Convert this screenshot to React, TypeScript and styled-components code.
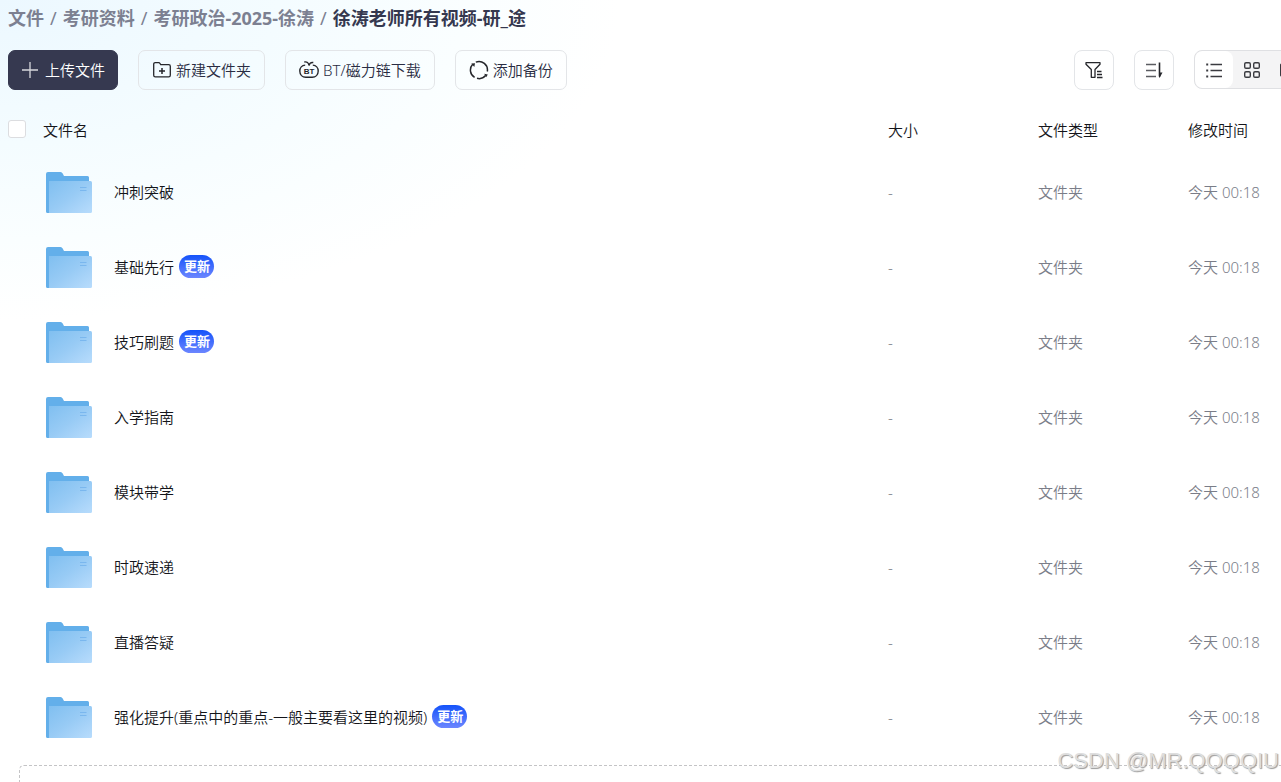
import React from "react";
import styled, { createGlobalStyle, css } from "styled-components";

const GlobalStyle = createGlobalStyle`
  * { box-sizing: border-box; }
  body {
    margin: 0;
    background: #fff;
    color: #14151a;
    font-family: "Noto Sans", "Noto Sans CJK SC", sans-serif;
    font-size: 15px;
    font-weight: 350;
    line-height: 20px;
  }
  button, input { font: inherit; }
`;

const Page = styled.main`
  position: relative;
  display: flex;
  flex-direction: column;
  height: 100vh;
  min-height: 782px;
  overflow: hidden;
  padding-left: 8px;
  background: radial-gradient(ellipse 620px 320px at 0 0, #ecf8ff 0%, #f4fcff 45%, #fafeff 75%, #ffffff 100%);
`;

const Breadcrumb = styled.nav`
  display: flex;
  align-items: center;
  gap: 6px;
  padding-top: 6px;
  height: 30px;
  font-size: 18px;
  line-height: 24px;
  font-weight: 700;
  color: #7c8091;
  white-space: nowrap;
`;

const Crumb = styled.a<{ $current?: boolean }>`
  color: ${(p) => (p.$current ? "#35384f" : "inherit")};
  text-decoration: none;
`;

const Slash = styled.span`
  font-size: 18px;
  font-weight: 400;
`;

const Toolbar = styled.div`
  display: flex;
  justify-content: space-between;
  flex-shrink: 0;
  margin: 20px -29px 15px 0;
`;

const Group = styled.div`
  display: flex;
  gap: 20px;
`;

const ActionButton = styled.button<{ $primary?: boolean }>`
  display: flex;
  align-items: center;
  gap: 4px;
  height: 40px;
  padding: 0 13px;
  border: 1px solid #e3e5e8;
  border-radius: 7px;
  background: transparent;
  color: #292c42;
  white-space: nowrap;
  cursor: pointer;
  ${(p) =>
    p.$primary &&
    css`
      gap: 6px;
      padding: 0 12px;
      border-color: #363950;
      background: #363950;
      color: #fff;
    `}
`;

const IconButton = styled.button`
  display: grid;
  place-items: center;
  width: 40px;
  height: 40px;
  padding: 0;
  border: 1px solid #e3e5e8;
  border-radius: 8px;
  background: #fff;
  color: #25262b;
  cursor: pointer;
`;

const ViewSwitch = styled.div`
  display: flex;
  height: 39px;
  overflow: hidden;
  border: 1px solid #dfe0e3;
  border-radius: 8px;
  background: #f4f4f5;
`;

const ViewButton = styled.button<{ $active?: boolean }>`
  display: grid;
  place-items: center;
  width: 38px;
  padding: 0;
  border: 0;
  border-radius: 8px;
  background: ${(p) => (p.$active ? "#fff" : "transparent")};
  color: #25262b;
  cursor: pointer;
`;

const FileTable = styled.table`
  width: 100%;
  table-layout: fixed;
  border-collapse: collapse;
`;

const Column = styled.col<{ $width?: number }>`
  width: ${(p) => (p.$width ? `${p.$width}px` : "auto")};
`;

const HeadCell = styled.th`
  height: 50px;
  padding: 0;
  text-align: left;
  font-weight: inherit;
`;

const Cell = styled.td`
  height: 75px;
  padding: 0;
`;

const MetaCell = styled(Cell)`
  padding-bottom: 2px;
  color: #7a7d88;
`;

const Checkbox = styled.input`
  appearance: none;
  display: block;
  width: 18px;
  height: 18px;
  margin: 0 0 2px;
  border: 1px solid #dcdde0;
  border-radius: 3px;
  background: #fff;
`;

const FileEntry = styled.div`
  display: flex;
  align-items: center;
  padding-left: 3px;
  white-space: nowrap;
`;

const FileLink = styled.a`
  margin: 0 0 2px 22px;
  color: inherit;
  text-decoration: none;
`;

const Badge = styled.span`
  height: 23px;
  margin: 0 0 2px 5px;
  padding: 0 4px 0 5px;
  border-radius: 12px;
  background: linear-gradient(#1453fa, #6c86ff);
  color: #fff;
  font-size: 13px;
  font-weight: 700;
  line-height: 23px;
`;

const DropZone = styled.div`
  flex: 1;
  margin: 10px 0 0 11px;
  border: 1px dashed #c4c4c6;
  border-right: 0;
  border-bottom: 0;
  border-top-left-radius: 5px;
`;

const Watermark = styled.span`
  position: absolute;
  right: 2px;
  bottom: 8px;
  color: #dedede;
  font-family: "Liberation Sans", sans-serif;
  font-size: 22px;
  font-weight: 400;
  line-height: 26px;
  text-shadow: 1px 1px 1px #9a9a9a;
`;

const PlusIcon = () => (
  <svg width="18" height="18" viewBox="0 0 18 18" stroke="#d7d7dc" strokeWidth="1.3" aria-hidden="true">
    <path d="M9 1v16M1 9h16" />
  </svg>
);

const NewFolderIcon = () => (
  <svg width="20" height="20" viewBox="0 0 20 20" fill="none" stroke="#25262b" strokeWidth="1.3" aria-hidden="true">
    <path d="M1.7 4.2c0-1 .6-1.500 1.500-1.500h3.500c.7 0 1 .3 1.300.8l.7 1.200h8c1 0 1.600.6 1.600 1.500v9c0 1-.6 1.600-1.600 1.600H3.300c-1 0-1.600-.6-1.600-1.600z" />
    <path d="M10 8v6M7 11h6" strokeWidth="1.5" />
  </svg>
);

const BtIcon = () => (
  <svg width="20" height="20" viewBox="0 0 20 20" fill="none" stroke="#25262b" strokeWidth="1.4" aria-hidden="true">
    <path d="M6.200 5.100C3 5.300.8 7.800.8 11c0 3.700 2.600 6.200 6 6.200h6.400c3.400 0 6-2.500 6-6.200 0-3.200-2.200-5.700-5.400-5.900" />
    <path d="M5.300 2c2.700-.5 4.300.7 4.700 3.500.4-2.200 1.800-3.300 4.300-3" />
    <text x="10" y="14" fill="#25262b" stroke="none" textAnchor="middle" fontFamily="Liberation Sans, sans-serif" fontSize="8" fontWeight="700">
      BT
    </text>
  </svg>
);

const BackupIcon = () => (
  <svg width="20" height="20" viewBox="0 0 20 20" fill="none" stroke="#25262b" strokeWidth="1.500" aria-hidden="true">
    <path d="M5.600 17.400A8.500 8.500 0 0 1 3.700 4.300M6.800 2.100A8.500 8.500 0 0 1 18.300 11.500M16.600 15.600A8.500 8.500 0 0 1 8 18.300" />
    <path d="M2.300 3.400 6 3.200 5.300 7zM18.800 14.500l-1.600 2.800-2-3.500z" fill="#25262b" stroke="none" />
  </svg>
);

const FilterIcon = () => (
  <svg width="20" height="20" viewBox="0 0 20 20" fill="none" stroke="currentColor" strokeWidth="1.300" strokeLinejoin="round" aria-hidden="true">
    <path d="M2 2.700h14v1.600L11 9.500v7.800H7.300V9.500L2 4.300z" />
    <path d="M13 11.500h4.500M13 14.500h5M13 17.500h5.500" />
  </svg>
);

const SortIcon = () => (
  <svg width="20" height="20" viewBox="0 0 20 20" fill="none" aria-hidden="true">
    <path d="M2 4.500h10M2 10.500h10M2 16.500h10" stroke="#5b5c61" strokeWidth="1.500" />
    <path d="M15.500 2.500v14" stroke="#25262b" strokeWidth="1.600" />
    <path d="M15 12.500h3.500l-2.700 5H15z" fill="#25262b" />
  </svg>
);

const ListIcon = () => (
  <svg width="18" height="18" viewBox="0 0 18 18" fill="none" stroke="#3a3b40" strokeWidth="1.400" aria-hidden="true">
    <path d="M5.500 3.500H17M5.500 9.500H17M5.500 15.500H17" />
    <path d="M1.200 3.500h2M1.200 9.500h2M1.200 15.500h2" strokeWidth="1.800" />
  </svg>
);

const GridIcon = () => (
  <svg width="18" height="18" viewBox="0 0 18 18" fill="none" stroke="#3a3b40" strokeWidth="1.400" aria-hidden="true">
    <rect x="1.700" y="1.700" width="5.600" height="5.600" rx="1.300" />
    <rect x="10.700" y="1.700" width="5.600" height="5.600" rx="1.300" />
    <rect x="1.700" y="10.700" width="5.600" height="5.600" rx="1.300" />
    <rect x="10.700" y="10.700" width="5.600" height="5.600" rx="1.300" />
  </svg>
);

const GalleryIcon = () => (
  <svg width="20" height="18" viewBox="0 0 20 18" fill="none" stroke="#3a3b40" strokeWidth="1.400" aria-hidden="true">
    <rect x=".7" y="3" width="18.600" height="12" rx="1" />
  </svg>
);

const FolderIcon = () => (
  <svg width="46" height="42" viewBox="0 0 46 42" aria-hidden="true">
    <defs>
      <linearGradient id="folderFront" x1="0" y1="0" x2="1" y2="1">
        <stop offset="0" stopColor="#80bff0" />
        <stop offset=".5" stopColor="#98cbf5" />
        <stop offset="1" stopColor="#b8dcfc" />
      </linearGradient>
    </defs>
    <path d="M0 2Q0 0 2 0h12.500q1.500 0 2.200 1.500L18 4h23.500Q43 4 43 5.500V41H1.500Q0 41 0 39.500z" fill="#63afea" />
    <path d="M3 9h41.500Q46 9 46 10.500v29Q46 41 44.500 41H3z" fill="url(#folderFront)" />
    <path d="M34 15.500h6.500M34 18.500h6.500" stroke="#7ab7ee" />
  </svg>
);

const path = ["文件", "考研资料", "考研政治-2025-徐涛", "徐涛老师所有视频-研_途"];

const files = [
  { name: "冲刺突破" },
  { name: "基础先行", updated: true },
  { name: "技巧刷题", updated: true },
  { name: "入学指南" },
  { name: "模块带学" },
  { name: "时政速递" },
  { name: "直播答疑" },
  { name: "强化提升(重点中的重点-一般主要看这里的视频)", updated: true },
];

export default function App() {
  return (
    <>
      <GlobalStyle />
      <Page>
        <Breadcrumb>
          {path.map((name, i) => (
            <React.Fragment key={name}>
              {i > 0 && <Slash>/</Slash>}
              <Crumb href="#" $current={i === path.length - 1}>
                {name}
              </Crumb>
            </React.Fragment>
          ))}
        </Breadcrumb>

        <Toolbar>
          <Group>
            <ActionButton $primary>
              <PlusIcon />
              上传文件
            </ActionButton>
            <ActionButton>
              <NewFolderIcon />
              新建文件夹
            </ActionButton>
            <ActionButton>
              <BtIcon />
              BT/磁力链下载
            </ActionButton>
            <ActionButton>
              <BackupIcon />
              添加备份
            </ActionButton>
          </Group>
          <Group>
            <IconButton aria-label="筛选">
              <FilterIcon />
            </IconButton>
            <IconButton aria-label="排序">
              <SortIcon />
            </IconButton>
            <ViewSwitch>
              <ViewButton $active aria-label="列表">
                <ListIcon />
              </ViewButton>
              <ViewButton aria-label="网格">
                <GridIcon />
              </ViewButton>
              <ViewButton aria-label="大图">
                <GalleryIcon />
              </ViewButton>
            </ViewSwitch>
          </Group>
        </Toolbar>

        <FileTable>
          <colgroup>
            <Column $width={35} />
            <Column />
            <Column $width={150} />
            <Column $width={150} />
            <Column $width={93} />
          </colgroup>
          <thead>
            <tr>
              <HeadCell>
                <Checkbox type="checkbox" aria-label="全选" />
              </HeadCell>
              <HeadCell>文件名</HeadCell>
              <HeadCell>大小</HeadCell>
              <HeadCell>文件类型</HeadCell>
              <HeadCell>修改时间</HeadCell>
            </tr>
          </thead>
          <tbody>
            {files.map((file) => (
              <tr key={file.name}>
                <Cell />
                <Cell>
                  <FileEntry>
                    <FolderIcon />
                    <FileLink href="#">{file.name}</FileLink>
                    {file.updated && <Badge>更新</Badge>}
                  </FileEntry>
                </Cell>
                <MetaCell>-</MetaCell>
                <MetaCell>文件夹</MetaCell>
                <MetaCell>今天 00:18</MetaCell>
              </tr>
            ))}
          </tbody>
        </FileTable>

        <DropZone />
        <Watermark>CSDN @MR.QQQQIU</Watermark>
      </Page>
    </>
  );
}
